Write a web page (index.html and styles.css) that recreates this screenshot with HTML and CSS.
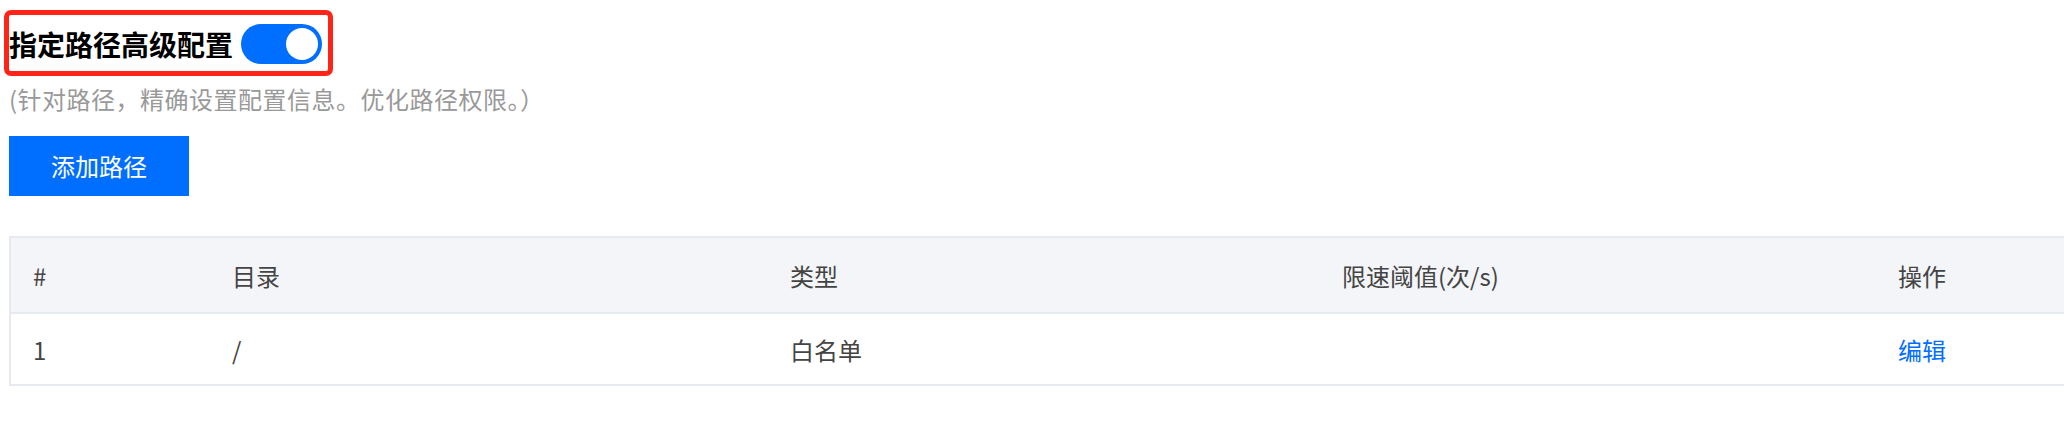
FILE: index.html
```html
<!DOCTYPE html>
<html lang="zh-CN">
<head>
<meta charset="utf-8">
<title>指定路径高级配置</title>
<link rel="stylesheet" href="styles.css">
</head>
<body>
<div class="page">
  <div class="title-row">
    <h2 class="title">指定路径高级配置</h2>
    <span class="switch" role="switch" aria-checked="true"><span class="knob"></span></span>
    <span class="highlight"></span>
  </div>
  <p class="desc">(针对路径，精确设置配置信息。优化路径权限。）</p>
  <button class="btn-primary" type="button">添加路径</button>
  <table class="grid">
    <thead>
      <tr>
        <th class="c-idx">#</th>
        <th class="c-dir">目录</th>
        <th class="c-type">类型</th>
        <th class="c-limit">限速阈值(次/s)</th>
        <th class="c-op">操作</th>
      </tr>
    </thead>
    <tbody>
      <tr>
        <td class="c-idx">1</td>
        <td class="c-dir">/</td>
        <td class="c-type">白名单</td>
        <td class="c-limit"></td>
        <td class="c-op"><a class="link" href="#">编辑</a></td>
      </tr>
    </tbody>
  </table>
</div>
</body>
</html>
```
FILE: styles.css
```css
html, body {
  margin: 0;
  padding: 0;
  background: #ffffff;
  overflow: hidden;
}
body {
  font-family: "Noto Sans CJK SC", "Noto Sans", sans-serif;
  color: #444;
}
.page {
  padding: 24px 0 0 9px;
  width: 2200px;
}
.title-row {
  position: relative;
  display: flex;
  align-items: center;
  gap: 8px;
  height: 40px;
}
.title {
  margin: 0;
  font-size: 28px;
  line-height: 40px;
  font-weight: 700;
  color: #000;
}
.switch {
  display: flex;
  align-items: center;
  justify-content: flex-end;
  box-sizing: border-box;
  width: 81px;
  height: 40px;
  padding: 0 4px;
  border-radius: 20px;
  background: #006eff;
}
.knob {
  width: 32px;
  height: 32px;
  border-radius: 50%;
  background: #fff;
}
.highlight {
  position: absolute;
  left: -5px;
  top: -14px;
  width: 329px;
  height: 66px;
  box-sizing: border-box;
  border: 5px solid #ff2418;
  border-radius: 7px;
  pointer-events: none;
}
.desc {
  margin: 19px 0 0 0;
  font-size: 24px;
  line-height: 32px;
  letter-spacing: 0.5px;
  color: #999;
}
.btn-primary {
  display: block;
  margin-top: 21px;
  width: 180px;
  height: 60px;
  border: 0;
  padding: 0;
  background: #006eff;
  color: #fff;
  font-family: inherit;
  font-size: 24px;
  line-height: 60px;
}
.grid {
  margin-top: 40px;
  border-collapse: separate;
  border-spacing: 0;
  table-layout: fixed;
  width: 2100px;
  border-top: 2px solid #e6e9ef;
  border-left: 2px solid #e6e9ef;
  font-size: 24px;
}
.grid th,
.grid td {
  box-sizing: border-box;
  padding: 0 0 0 22px;
  text-align: left;
  font-weight: 400;
  color: #444;
  border-bottom: 2px solid #e6e9ef;
  white-space: nowrap;
}
.grid th {
  height: 76px;
  background: #f4f5f8;
}
.grid td {
  height: 72px;
}
.c-idx { width: 199px; }
.c-dir { width: 558px; }
.c-type { width: 552px; }
.c-limit { width: 556px; }
.c-op { width: 233px; }
.link {
  color: #006eff;
  text-decoration: none;
}
```
